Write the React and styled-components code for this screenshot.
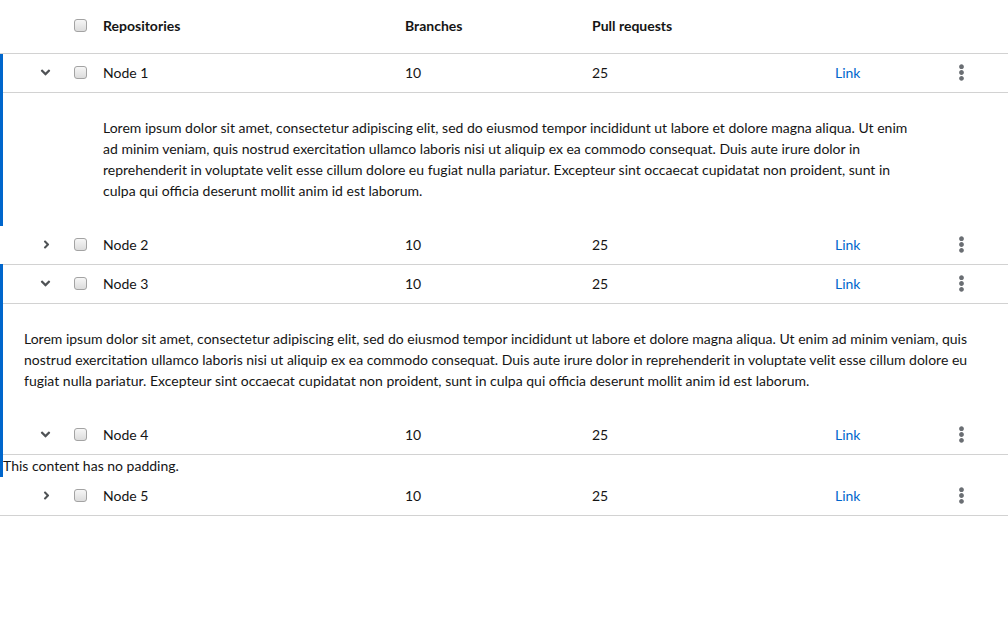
import React from 'react';
import styled, { createGlobalStyle } from 'styled-components';
import { FaAngleDown, FaAngleRight, FaEllipsisV } from 'react-icons/fa';

const GlobalStyle = createGlobalStyle`
  body {
    margin: 0;
    background: #fff;
    font-family: Lato, "Noto Sans", sans-serif;
    font-size: 14px;
    color: #151515;
  }
`;

const COLUMNS = '62px 41px 302px 187px 243px 100px 1fr';

const Table = styled.div`
  width: 1008px;
`;

const HeaderRow = styled.div`
  display: grid;
  grid-template-columns: ${COLUMNS};
  align-items: center;
  height: 54px;
  padding-bottom: 2px;
  box-sizing: border-box;
  border-bottom: 1px solid #d2d2d2;
  font-weight: 700;
`;

const Group = styled.div`
  position: relative;
  &::before {
    content: '';
    display: ${(p) => (p.$expanded ? 'block' : 'none')};
    position: absolute;
    left: 0;
    top: ${(p) => (p.$overlap ? '-1px' : '0')};
    bottom: 0;
    width: 3px;
    background: #06c;
    z-index: 1;
  }
`;

const Row = styled.div`
  display: grid;
  grid-template-columns: ${COLUMNS};
  align-items: center;
  height: 39px;
  padding-bottom: 2px;
  box-sizing: border-box;
  border-bottom: 1px solid #d2d2d2;
`;

const ToggleCell = styled.div`
  display: flex;
  align-items: center;
  padding-left: ${(p) => (p.$open ? '38px' : '40px')};
  color: #4f5255;
  font-size: ${(p) => (p.$open ? '15px' : '13px')};
`;

const CheckCell = styled.div`
  display: flex;
  align-items: center;
  padding-left: 12px;
`;

const Checkbox = styled.span`
  display: block;
  width: 11px;
  height: 11px;
  border: 1px solid #a3a3a3;
  border-radius: 3px;
  background: linear-gradient(#f6f6f6, #dcdcdc);
`;

const Cell = styled.div`
  white-space: nowrap;
`;

const LinkCell = styled.a`
  color: #06c;
  text-decoration: none;
`;

const KebabCell = styled.div`
  display: flex;
  align-items: center;
  padding-left: 18px;
  color: #6a6e73;
  font-size: 17px;
`;

const Expanded = styled.div`
  display: grid;
  grid-template-columns: ${COLUMNS};
`;

const ExpandedText = styled.div`
  grid-column: ${(p) => (p.$full ? '1 / -1' : '3 / 7')};
  padding: ${(p) => (p.$full ? '24px 24px 25px' : '24px 16px 25px 0')};
  line-height: 21px;
`;

const Bare = styled.div`
  padding-left: 3px;
  line-height: 22px;
`;

const LOREM =
  'Lorem ipsum dolor sit amet, consectetur adipiscing elit, sed do eiusmod tempor incididunt ut labore et dolore magna aliqua. Ut enim ad minim veniam, quis nostrud exercitation ullamco laboris nisi ut aliquip ex ea commodo consequat. Duis aute irure dolor in reprehenderit in voluptate velit esse cillum dolore eu fugiat nulla pariatur. Excepteur sint occaecat cupidatat non proident, sunt in culpa qui officia deserunt mollit anim id est laborum.';

function NodeRow({ name, open }) {
  return (
    <Row>
      <ToggleCell $open={open}>{open ? <FaAngleDown /> : <FaAngleRight />}</ToggleCell>
      <CheckCell>
        <Checkbox />
      </CheckCell>
      <Cell>{name}</Cell>
      <Cell>10</Cell>
      <Cell>25</Cell>
      <LinkCell href="#">Link</LinkCell>
      <KebabCell>
        <FaEllipsisV />
      </KebabCell>
    </Row>
  );
}

export default function App() {
  return (
    <Table>
      <GlobalStyle />
      <HeaderRow>
        <div />
        <CheckCell>
          <Checkbox />
        </CheckCell>
        <Cell>Repositories</Cell>
        <Cell>Branches</Cell>
        <Cell>Pull requests</Cell>
        <div />
        <div />
      </HeaderRow>

      <Group $expanded>
        <NodeRow name="Node 1" open />
        <Expanded>
          <ExpandedText>{LOREM}</ExpandedText>
        </Expanded>
      </Group>

      <Group>
        <NodeRow name="Node 2" />
      </Group>

      <Group $expanded $overlap>
        <NodeRow name="Node 3" open />
        <Expanded>
          <ExpandedText $full>{LOREM}</ExpandedText>
        </Expanded>
        <NodeRow name="Node 4" open />
        <Bare>This content has no padding.</Bare>
      </Group>

      <Group>
        <NodeRow name="Node 5" />
      </Group>
    </Table>
  );
}
